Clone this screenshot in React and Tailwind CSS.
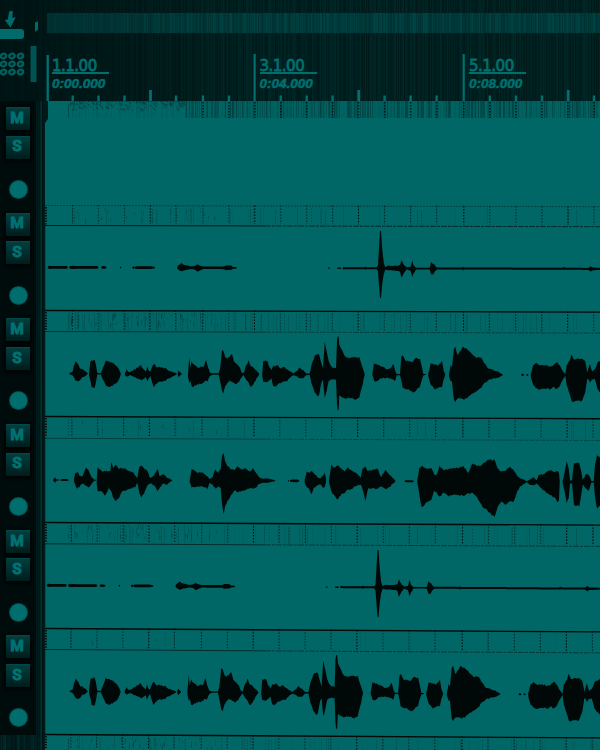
import React from "react";

const TEAL = "#006766";
const INK = "#000808";

// Waveform samples: centre-relative "x,up,down" triples in third-pixel units.
const VOICE_A = [
  "88,1,1 98,6,6 102,25,12 107,38,22 113,30,24 120,15,20 128,14,10 135,8,8 143,1,1",
  "147,2,4 151,35,20 155,40,42 164,41,42 168,25,25 172,2,2 183,2,3 190,20,20 197,40,34 205,37,40 212,34,38 220,32,34 228,25,30 236,15,18 242,2,2",
  "255,3,5 260,14,8 264,6,8 270,5,4 280,10,8 292,18,14 303,26,18 310,14,16 318,7,10 322,22,24 326,10,14 331,6,6 336,20,24 342,30,40 348,22,30 360,20,22 375,18,22 385,10,14 398,6,8 410,1,1",
  "413,2,2 416,10,10 419,6,6 425,1,1",
  "444,2,8 448,50,28 451,20,20 455,38,38 460,30,40 472,20,30 482,22,30 492,22,26 498,42,20 503,22,22 510,4,6 518,2,2 536,2,2 540,15,20 546,72,50 550,70,58 556,50,36 562,46,26 570,54,20 576,60,22 582,38,26 590,30,30 598,22,22 604,6,12 610,2,3 616,20,12 622,30,20 626,42,26 632,24,38 640,20,32 648,12,16 658,1,1",
  "667,3,6 670,40,24 682,40,24 686,26,20 694,12,12 700,26,36 705,24,38 714,26,30 722,18,26 732,22,22 742,14,20 752,8,8 760,2,3 770,10,6 780,20,12 790,12,12 798,3,3 809,2,2 815,30,30 824,55,55 832,60,66 838,58,60 844,34,26 849,18,16 854,98,70 860,70,50 866,40,20 876,22,16 888,18,16 891,100,90 893,114,108 896,113,106 898,90,62 910,64,70 918,52,72 930,48,70 945,52,76 958,52,70 965,28,40 974,2,2",
  "997,2,3 1002,34,18 1012,28,20 1024,24,12 1040,16,10 1052,18,12 1060,32,14 1066,10,18 1070,2,2 1080,2,2 1084,54,18 1088,58,40 1096,42,44 1106,40,44 1118,38,54 1128,50,48 1140,48,36 1146,22,14 1150,2,3 1158,1,1",
  "1165,3,4 1172,34,30 1184,30,44 1196,28,38 1206,42,38 1211,12,14 1216,1,1",
  "1227,3,5 1232,30,20 1236,22,20 1242,78,76 1246,84,82 1252,60,72 1262,72,70 1270,84,74 1282,76,70 1296,62,56 1310,50,50 1322,52,40 1334,34,24 1346,18,16 1360,14,12 1376,8,8 1388,1,1",
  "1444,2,2 1448,4,4 1452,1,1",
  "1459,2,2 1462,3,3 1465,1,1",
  "1472,3,4 1480,30,32 1490,36,40 1500,28,44 1516,30,42 1530,26,42 1540,28,36 1550,38,42 1560,28,32 1570,10,12 1576,2,2 1580,30,30 1590,44,60 1595,62,78 1602,46,80 1612,50,76 1625,50,78 1636,40,50 1642,8,10 1650,34,22 1656,12,12 1664,16,12 1672,36,40 1690,48,62",
];
const VOICE_B = [
  "39,1,1 45,8,8 50,2,2 58,1,1",
  "62,2,2 68,3,3 80,3,3 86,1,1",
  "102,4,4 106,22,14 112,24,26 120,12,18 128,12,10 134,28,14 138,38,18 146,28,22 154,10,12 162,2,2 168,1,1",
  "170,2,10 173,40,32 184,28,34 196,26,46 206,28,24 211,26,30 214,54,32 219,38,52 228,46,62 236,34,54 246,36,34 256,36,32 266,28,26 278,24,22 286,14,20 292,6,8 298,40,38 304,44,52 312,36,40 322,28,16 330,8,10 342,14,14 352,34,32 360,12,20 370,20,10 380,8,14 388,6,6 396,1,1",
  "449,2,4 455,35,22 468,26,18 484,24,18 494,18,20 502,14,26 508,4,8 518,10,12 526,34,24 534,22,18 542,34,22 546,74,70 551,82,100 556,56,74 564,42,60 574,34,42 584,32,30 592,44,34 606,34,32 616,38,28 630,26,22 638,38,24 648,24,20 658,10,10 668,6,6 684,7,6 706,1,1",
  "744,2,2 748,1,1",
  "750,2,2 758,4,4 772,4,4 778,1,1",
  "794,4,6 800,28,18 808,24,26 814,30,40 822,22,20 832,12,14 840,8,10 848,14,20 854,26,18 858,6,4",
  "867,4,4 874,50,30 880,40,40 892,46,56 904,38,40 914,28,36 922,40,26 934,32,24 950,22,14 962,10,10 968,38,26 976,44,60 984,30,24 996,32,22 1012,38,24 1024,12,16 1036,34,24 1048,20,18 1066,2,2",
  "1094,2,2 1100,3,3 1116,3,3 1122,1,1",
  "1132,4,4 1138,40,40 1145,46,78 1160,38,62 1174,40,56 1182,22,28 1190,20,34 1198,46,46 1212,34,34 1224,36,44 1240,40,40 1256,40,40 1270,46,44 1284,26,36 1298,54,34 1312,46,48 1326,50,74 1344,66,90 1364,64,106 1374,38,74 1384,30,60 1398,34,70 1410,44,60 1420,36,62 1430,20,34 1440,10,14 1452,6,8 1460,1,2 1470,6,10 1480,12,12 1490,4,6 1496,20,12 1510,22,26 1530,34,40 1545,30,48 1552,32,62 1557,26,54 1559,1,1",
  "1568,3,3 1574,30,30 1580,62,64 1586,40,50 1590,3,5 1596,5,5 1602,56,70 1618,56,74 1624,30,40 1628,6,10 1636,20,20 1644,24,28 1650,14,16 1654,2,2 1661,2,2 1665,50,45 1671,80,80 1690,62,62",
];
const DRUM = [
  "23,1,1 27,5,5 34,4,4 80,4,4 83,2,2",
  "88,3,3 96,5,5 110,4,4 172,4,4 175,2,2",
  "183,2,2 188,4,4 196,4,4 200,1,1",
  "240,1,1 242,3,3 244,1,1",
  "277,1,1 281,4,4 284,1,1 288,4,4 334,4,4 338,3,3 345,1,2",
  "412,3,3 418,10,8 424,15,10 432,8,8 442,7,6 452,4,4 464,5,5 472,11,11 480,6,8 490,4,4 552,4,4 558,7,7 574,7,6 578,3,3 590,2,2",
  "864,1,1 867,2,2 870,1,1",
  "892,2,2 897,2,2 903,2,3",
  "908,3,3 930,3,3 974,3,3 976,5,5 979,3,3 1010,3,3 1014,8,10 1017,60,50 1020,112,90 1023,112,88 1027,55,45 1031,18,18 1036,4,4 1044,8,6 1054,7,6 1074,8,8 1080,10,10 1085,25,28 1090,14,18 1100,3,3 1112,5,8 1117,24,26 1121,8,14 1128,2,3 1169,2,3 1174,20,18 1179,14,20 1190,3,3 1266,3,3 1269,5,5 1272,3,3 1566,3,3 1572,5,3 1578,3,3 1645,3,3 1652,8,8 1658,4,4 1690,3,3",
];

const TRACKS = [
  { top: 205, h: 105, rule: 225.5, tilt: 1.2, wave: DRUM, c: 267.3, drop: 1.6, dx: 0, sx: 1, shift: 0, topInk: 0.35, baseInk: 0.8, noise: 0.35 },
  { top: 310, h: 106, rule: 331.5, tilt: 1.6, wave: VOICE_A, c: 373.5, drop: 1.6, dx: 0, sx: 1, shift: -0.3, topInk: 1, baseInk: 0.5, noise: 1 },
  { top: 416, h: 106, rule: 438.3, tilt: 2.2, wave: VOICE_B, c: 480, drop: 1.8, dx: 0, sx: 1, shift: -0.9, topInk: 1, baseInk: 0.4, noise: 0.12 },
  { top: 522, h: 106, rule: 543.8, tilt: 2.6, wave: DRUM, c: 585.3, drop: 3.4, dx: -1, sx: 0.9955, shift: -1.3, topInk: 1, baseInk: 0.6, noise: 0.65 },
  { top: 628, h: 106, rule: 649.5, tilt: 3.4, wave: VOICE_A, c: 691, drop: 3.7, dx: 0.3, sx: 0.994, shift: -1.6, topInk: 1, baseInk: 0.6, noise: 0.05 },
  { top: 734, h: 16, rule: 756, tilt: 3.4, wave: [], c: 0, drop: 0, dx: 0, sx: 1, shift: -1.8, topInk: 1, baseInk: 0, noise: 0.6 },
];

const TICKS = [72.7, 98.5, 124.5, 150.3, 176, 203, 229, 254.8, 280.7, 306.7, 332.6, 358.5, 384.6, 410.6, 436.6, 463.8, 489.8, 516, 542, 568, 594];

function rng(seed) {
  let s = seed;
  return () => {
    s = (s * 16807) % 2147483647;
    return s / 2147483647;
  };
}

// Fine vertical scan lines; `ramp` is the width over which they fade in.
function Grain({ w, h, seed, light = 0.1, dark = 0.3, ramp = 0 }) {
  const r = rng(seed);
  const bars = [];
  for (let x = 0; x < w; x += 1) {
    const k = ramp ? Math.min(1, 0.25 + x / ramp) : 1;
    const bright = r() > 0.5;
    bars.push(
      <rect key={x} x={x} y="0" width="1" height={h} fill={bright ? "#008080" : "#000"} opacity={(r() * (bright ? light : dark) * k).toFixed(3)} />
    );
  }
  return (
    <svg className="block" width={w} height={h} shapeRendering="crispEdges">
      {bars}
    </svg>
  );
}

// Interpolates the samples at one column per pixel, with a small ragged edge.
function wavePath(text, t, seed) {
  const r = rng(seed);
  const pts = text.split(" ").map((p) => p.split(",").map(Number));
  const dense = [];
  pts.forEach(([x, u, d], i) => {
    dense.push([x, u, d]);
    const next = pts[i + 1];
    if (!next) return;
    for (let q = x + 3; q < next[0] - 1; q += 3) {
      const f = (q - x) / (next[0] - x);
      const a = u + (next[1] - u) * f;
      const b = d + (next[2] - d) * f;
      const ja = a > 9 ? (r() - 0.5) * 5 : 0;
      const jb = b > 9 ? (r() - 0.5) * 5 : 0;
      dense.push([q, a + ja, b + jb]);
    }
  });
  const pos = (x) => (x / 3 - 5) * t.sx + t.dx;
  const mid = (x) => t.c - t.top + (t.drop * x) / 1680;
  const up = dense.map(([x, u]) => `${pos(x).toFixed(1)},${(mid(x) - u / 3).toFixed(1)}`);
  const down = dense.map(([x, , d]) => `${pos(x).toFixed(1)},${(mid(x) + d / 3).toFixed(1)}`).reverse();
  return `M${up.concat(down).join("L")}Z`;
}

function Track({ t }) {
  const r = rng(t.top * 31 + 7);
  const base = t.rule - t.top;
  const rh = Math.min(base, t.h);
  const at = (x) => (t.tilt * x) / 555;
  const noise = [];
  for (let i = 0; i < 210 * t.noise; i++) {
    const dense = i % 2 === 0;
    const x = Math.round(dense ? 22 + r() * 150 : 22 + Math.pow(r(), 1.3) * 530);
    const y = 2 + r() * (dense ? 12 : 3);
    const len = dense ? 1 + r() * 5 : rh - 5;
    noise.push(<line key={i} x1={x + 0.5} x2={x + 0.5} y1={y + at(x)} y2={Math.min(y + len, rh - 1) + at(x)} stroke={INK} opacity={0.05 + r() * 0.18} strokeDasharray={dense ? "none" : "2 1"} />);
  }
  return (
    <svg className="block shrink-0 overflow-visible" width="555" height={t.h}>
      {noise}
      <line x1="0" y1="0.5" x2="555" y2={0.5 + t.tilt} stroke={INK} strokeWidth={t.topInk === 1 ? 1.4 : 1} opacity={t.topInk} strokeDasharray={t.topInk === 1 ? "none" : "2 1"} />
      {t.baseInk > 0 && (
        <>
          <line x1="0" y1={base} x2="220" y2={base + at(220)} stroke={INK} opacity={t.baseInk} />
          <line x1="220" y1={base + at(220)} x2="555" y2={base + t.tilt} stroke={INK} opacity={t.baseInk * 0.8} strokeDasharray="6 1 3 1" />
        </>
      )}
      <line x1="1" y1="2" x2="1" y2={rh - 1} stroke={INK} strokeWidth="1.6" strokeDasharray="1.5 1.2" />
      <line x1="0.5" y1={rh} x2="0.5" y2={t.h} stroke={INK} opacity="0.45" strokeDasharray="1 1" />
      {TICKS.map((x, i) => {
        const px = x - 45 + t.shift;
        return <line key={x} x1={px} x2={px} y1={at(px)} y2={rh - 2 + at(px)} stroke={INK} strokeWidth="1.1" opacity={i % 4 === 3 ? 0.95 : 0.5 + r() * 0.25} strokeDasharray="1.5 1.5" />;
      })}
      {t.wave.map((text, i) => (
        <path key={i} d={wavePath(text, t, i * 97 + 11)} fill={INK} />
      ))}
    </svg>
  );
}

function PadButton({ label, className }) {
  return (
    <div className={`flex h-[23px] w-[24px] items-center justify-center border-t border-[#004a49] bg-linear-to-b from-[#003f3e] to-[#001d1d] font-[Roboto,sans-serif] text-[15.5px] leading-none font-bold text-[#007271] shadow-[0_1px_3px_2px_#000404] [-webkit-text-stroke:0.8px_#007271] ${className}`}>
      <span className="-mt-px -ml-px">{label}</span>
    </div>
  );
}

function TrackControls() {
  return (
    <div className="flex h-[105.7px] shrink-0 flex-col pt-[6px] pl-[5.5px]">
      <PadButton label="M" className="" />
      <PadButton label="S" className="mt-[5.5px]" />
      <div className="mt-[21.5px] ml-[3px] flex size-[19px] items-center justify-center rounded-full bg-[#005150]">
        <div className="size-[17px] rounded-full bg-[#006e6d]" />
      </div>
    </div>
  );
}

function TimeMark({ bars, time, className }) {
  return (
    <div className={`flex h-[47px] w-[62.5px] shrink-0 pl-[5.5px] text-[#006f6e] ${className}`}>
      <div className="w-[57px]">
        <div className="h-[18px] pt-[3.5px] font-['DejaVu_Sans',Verdana,sans-serif] text-[15px] leading-[16px] tracking-[-0.5px] [-webkit-text-stroke:0.8px_#006f6e]">{bars}</div>
        <div className="h-[2px] bg-[#006f6e]" />
        <div className="pt-[2px] font-['Liberation_Sans',Arial,sans-serif] text-[13.5px] leading-[16px] font-bold whitespace-nowrap italic [-webkit-text-stroke:0.6px_#006f6e]">{time}</div>
      </div>
    </div>
  );
}

function ToolColumn() {
  return (
    <div className="relative w-[45px] shrink-0 bg-[#001414]">
      <div className="absolute inset-0">
        <Grain w={45} h={101} seed={55} light={0.03} dark={0.12} />
      </div>
      <svg className="relative block" width="45" height="101" fill="#006b6a">
        <path d="M9.2 11.5 12.8 10.8 12.4 18 15.8 17 10.5 27.5 4.8 20 7.8 19.5Z" />
        <rect x="-4" y="29" width="28" height="10" rx="3" />
        <path d="M35 22.5 38 21.2v8.3L35 31.8Z" />
        <rect x="30.5" y="46" width="6" height="36" fill="#005352" />
        <g fill="#002b2b" stroke="#006261" strokeWidth="2">
          {[56, 64, 72].map((y) => [3.5, 12, 20.5].map((x) => <ellipse key={`${x}-${y}`} cx={x} cy={y} rx="2.9" ry="2.3" transform={`rotate(-28 ${x} ${y})`} />))}
        </g>
      </svg>
    </div>
  );
}

function Timeline() {
  return (
    <div className="relative w-[555px] shrink-0 overflow-hidden bg-linear-to-r from-[#001616] to-[#002020] to-40%">
      <div className="absolute inset-0">
        <Grain w={555} h={101} seed={913} light={0.07} dark={0.24} ramp={250} />
      </div>
      <div className="relative flex h-full flex-col">
        <div className="mt-[13px] ml-[2px] h-[21px] overflow-hidden bg-linear-to-r from-[#003030] to-[#003939] to-40%">
          <Grain w={553} h={21} seed={71} light={0.17} dark={0.14} ramp={200} />
        </div>
        <div className="mt-[21px] flex pl-[1.5px]">
          <TimeMark bars="1.1.00" time="0:00.000" className="mr-[145px]" />
          <TimeMark bars="3.1.00" time="0:04.000" className="mr-[147px]" />
          <TimeMark bars="5.1.00" time="0:08.000" className="" />
        </div>
      </div>
      <svg className="absolute inset-0" width="555" height="101" fill="#006f6e">
        {TICKS.map((x, i) => {
          if (x === 254.8 || x === 463.8) return null;
          return <rect key={x} x={x - 46.2} y={i % 4 === 3 ? 90 : 95.5} width={i % 4 === 3 ? 2.8 : 2.4} height="12" />;
        })}
        <rect x="1.5" y="55" width="2.4" height="46" />
        <rect x="208.5" y="54" width="2.2" height="47" />
        <rect x="417.6" y="54" width="2.2" height="47" />
      </svg>
    </div>
  );
}

function FirstTrack() {
  const r = rng(4242);
  const specks = Array.from({ length: 130 }, (_, i) => (
    <path key={i} d={`M${24 + r() * 115} ${1 + Math.pow(r(), 2) * 7}l${r() * 3} ${1 + r() * 2}`} stroke="#002c2c" opacity={0.2 + r() * 0.45} />
  ));
  return (
    <div className="h-[104px] shrink-0">
      <div className="flex h-[17px] pl-[23px]">
        <div className="w-[117px] opacity-40">
          <Grain w={117} h={17} seed={33} light={0.1} dark={0.2} />
        </div>
        <div className="w-[415px] bg-[#005e5d]">
          <Grain w={415} h={17} seed={39} light={0.2} dark={0.28} />
        </div>
      </div>
      <svg className="-mt-[17px] block" width="555" height="24">
        {specks}
        <path d="M23.5 16.5V4l5-3.5H140V4" fill="none" stroke="#002c2c" opacity=".6" strokeDasharray="2 1" />
        <path d="M0 0h3v18l-3 4Z" fill="#001a1a" />
        {TICKS.slice(5).map((x) => (
          <line key={x} x1={x - 45} x2={x - 45} y1="1" y2="17" stroke={INK} strokeWidth="1.6" opacity=".75" strokeDasharray="1.5 1.5" />
        ))}
      </svg>
    </div>
  );
}

export default function App() {
  return (
    <div className="flex h-[750px] w-[600px] flex-col overflow-hidden" style={{ backgroundColor: TEAL }}>
      <header className="flex h-[101px] shrink-0">
        <ToolColumn />
        <Timeline />
      </header>
      <main className="flex h-[649px]">
        <aside className="flex w-[45px] shrink-0 bg-[#001d1d]">
          <div className="flex w-[36px] shrink-0 flex-col">
            <div className="flex h-[634px] flex-col bg-[#000c0c]">
              {[0, 1, 2, 3, 4, 5].map((n) => (
                <TrackControls key={n} />
              ))}
            </div>
            <Grain w={36} h={15} seed={17} light={0.15} dark={0.2} />
          </div>
          <Grain w={9} h={649} seed={23} light={0.2} dark={0.4} />
        </aside>
        <section className="flex w-[555px] shrink-0 flex-col overflow-hidden bg-[#006766]">
          <FirstTrack />
          {TRACKS.map((t) => (
            <Track key={t.top} t={t} />
          ))}
        </section>
      </main>
    </div>
  );
}
